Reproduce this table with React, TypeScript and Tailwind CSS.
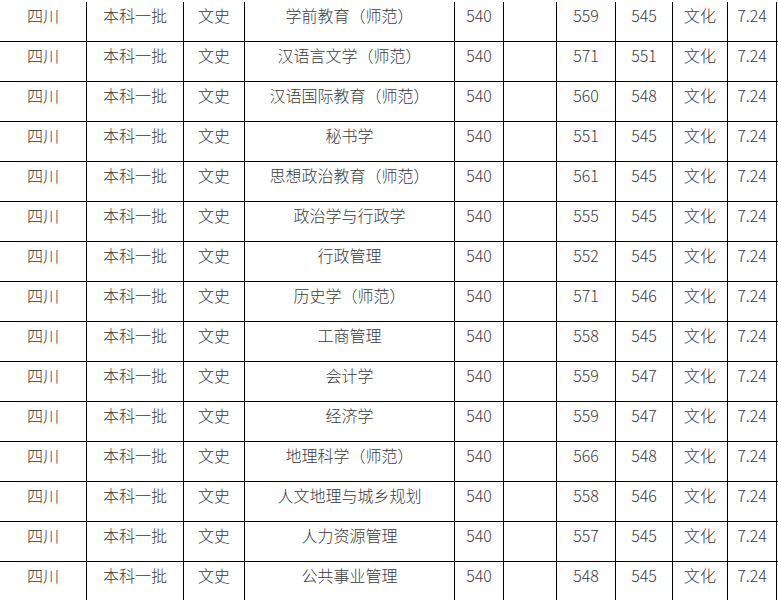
import React from "react";

const rows: [string, string, string][] = [
  ["学前教育（师范）", "559", "545"],
  ["汉语言文学（师范）", "571", "551"],
  ["汉语国际教育（师范）", "560", "548"],
  ["秘书学", "551", "545"],
  ["思想政治教育（师范）", "561", "545"],
  ["政治学与行政学", "555", "545"],
  ["行政管理", "552", "545"],
  ["历史学（师范）", "571", "546"],
  ["工商管理", "558", "545"],
  ["会计学", "559", "547"],
  ["经济学", "559", "547"],
  ["地理科学（师范）", "566", "548"],
  ["人文地理与城乡规划", "558", "546"],
  ["人力资源管理", "557", "545"],
  ["公共事业管理", "548", "545"],
];

export default function App() {
  return (
    <div
      className="w-[778px] h-[600px] overflow-hidden bg-white pt-[2px] text-[#3a3a3a] text-[16px] font-light"
      style={{ fontFamily: '"Noto Sans CJK SC", "Noto Sans", sans-serif' }}
    >
      {rows.map((r, i) => {
        const cells = ["四川", "本科一批", "文史", r[0], "540", "", r[1], r[2], "文化", "7.24"];
        return (
          <div
            key={i}
            className="grid grid-cols-[87px_97px_61px_210px_49px_53px_59px_57px_55px_49px] h-[40px] box-border border-b border-black"
          >
            {cells.map((c, j) => (
              <div
                key={j}
                className="border-r border-black text-center leading-6 pt-[1px] whitespace-nowrap"
              >
                {c}
              </div>
            ))}
          </div>
        );
      })}
    </div>
  );
}
